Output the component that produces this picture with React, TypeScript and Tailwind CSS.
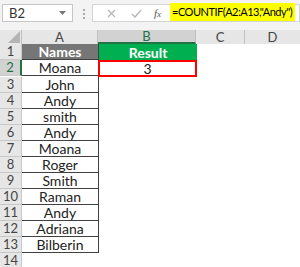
import React from "react";

const names = ["Moana","John","Andy","smith","Andy","Moana","Roger","Smith","Raman","Andy","Adriana","Bilberin"];

export default function App() {
  const font = { fontFamily: "Lato, 'Liberation Sans', sans-serif" };
  return (
    <div className="w-[300px] h-[267px] overflow-hidden bg-white relative" style={font}>
      {/* toolbar */}
      <div className="h-[30px] bg-[#f3f3f3] flex items-start pt-[4px]">
        <div className="ml-[2px] w-[71px] h-[18px] bg-white border border-[#c6c6c6] flex items-center justify-between px-[6px] text-[13px] text-[#333]">
          <span className="leading-none">B2</span>
          <svg width="7" height="4" viewBox="0 0 7 4"><path d="M0 0h7L3.5 4z" fill="#777" /></svg>
        </div>
        <div className="ml-[10px] mt-[5px] flex flex-col gap-[2px]">
          <div className="w-[2px] h-[2px] bg-[#aaa]" />
          <div className="w-[2px] h-[2px] bg-[#aaa]" />
          <div className="w-[2px] h-[2px] bg-[#aaa]" />
        </div>
        <div className="ml-[7px] flex-1 h-[18px] bg-white border border-[#d4d4d4] relative flex items-center">
          <svg className="ml-[14px]" width="9" height="9" viewBox="0 0 9 9"><path d="M1 1L8 8M8 1L1 8" stroke="#b5b5b5" strokeWidth="1.2" /></svg>
          <svg className="ml-[15px]" width="11" height="9" viewBox="0 0 11 9"><path d="M1 5L4 8L10 1" stroke="#b5b5b5" strokeWidth="1.3" fill="none" /></svg>
          <span className="ml-[12px] text-[11px] italic text-[#555]" style={{ fontFamily: "'Liberation Serif', serif" }}>f<span className="text-[9px]">x</span></span>
          <div className="absolute left-[77px] top-[-2px] w-[125px] h-[18px] bg-[#ffff00] flex items-center pl-[2px] text-[11px] tracking-[-0.045em] text-black whitespace-nowrap">
            =COUNTIF(A2:A13,"Andy")
          </div>
        </div>
      </div>
      {/* column headers */}
      <div className="flex h-[14px] bg-[#e6e6e6] text-[13px] text-[#444]">
        <div className="w-[22px] h-full border-r border-[#c0c0c0] relative">
          <svg className="absolute right-[1px] bottom-[1px]" width="12" height="12" viewBox="0 0 12 12"><path d="M12 0V12H0z" fill="#b4b4b4" /></svg>
        </div>
        <div className="w-[76px] h-full border-r border-[#c0c0c0] flex items-center justify-center leading-none">A</div>
        <div className="w-[98px] h-full bg-[#d2d2d2] border-r border-[#c0c0c0] border-b-2 border-b-[#217346] flex items-center justify-center leading-none text-[#217346]">B</div>
        <div className="w-[49px] h-full border-r border-[#c0c0c0] flex items-center justify-center leading-none">C</div>
        <div className="w-[55px] h-full flex items-center justify-center leading-none">D</div>
      </div>
      {/* rows */}
      <div className="flex">
        <div className="w-[22px] h-[16px] bg-[#e6e6e6] border-b border-r border-[#c8c8c8] flex items-center justify-center text-[13px] text-[#444]">1</div>
        <div className="w-[76px] h-[16px] bg-[#767676] border-b border-[#404040] flex items-center justify-center text-[14px] font-bold text-white">Names</div>
        <div className="w-[99px] h-[16px] bg-[#00b050] border-l border-[#404040] flex items-center justify-center text-[14px] font-bold text-white">Result</div>
      </div>
      {names.map((n, i) => (
        <div className="flex" key={i}>
          <div className={"w-[22px] h-[16px] border-b flex items-center justify-center text-[13px] " + (i === 0 ? "bg-[#d2d2d2] border-r-2 border-r-[#217346] border-b-[#c8c8c8] text-[#217346]" : "bg-[#e6e6e6] border-r border-[#c8c8c8] text-[#444]")}>{i + 2}</div>
          <div className="w-[77px] h-[16px] border-b border-r border-[#404040] flex items-center justify-center text-[14px] text-[#222]">{n}</div>
          {i === 0 ? (
            <div className="w-[99px] h-[17px] border-2 border-[#ff0000] flex items-center justify-center text-[14px] text-[#222] -ml-[1px]">3</div>
          ) : null}
        </div>
      ))}
      <div className="flex">
        <div className="w-[22px] h-[16px] bg-[#e6e6e6] border-b border-r border-[#c8c8c8] flex items-center justify-center text-[13px] text-[#444]">14</div>
      </div>
    </div>
  );
}
